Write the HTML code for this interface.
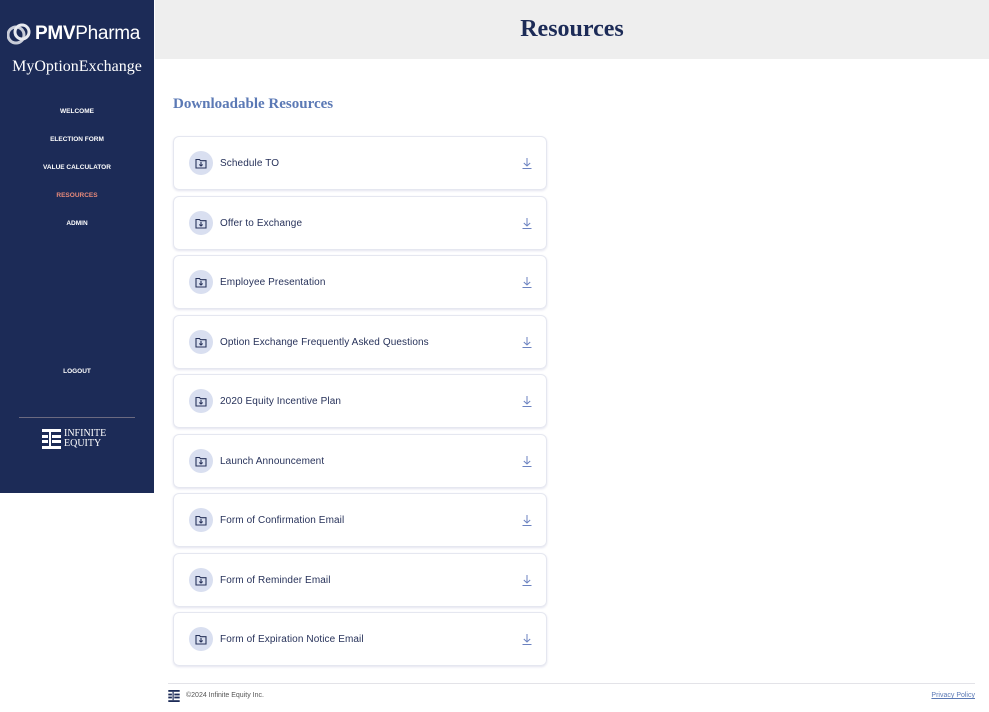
<!DOCTYPE html>
<html><head><meta charset="utf-8"><style>
*{margin:0;padding:0;box-sizing:border-box}
body{width:989px;height:712px;background:#fff;font-family:"Liberation Sans",sans-serif;position:relative;overflow:hidden}
.side{position:absolute;left:0;top:0;width:154px;height:493px;background:#1c2b57;color:#fff}
.logo{position:absolute;left:7px;top:22px;display:flex;align-items:center}
.logo .t{font-size:19px;margin-left:4px;letter-spacing:-0.3px}
.moe{position:absolute;top:58px;width:154px;text-align:center;font-family:"Liberation Serif",serif;font-size:16px}
.nav{position:absolute;width:154px;text-align:center;font-size:6.5px;font-weight:bold}
.hdr{position:absolute;left:155px;top:0;width:834px;height:59px;background:#eeeeee;text-align:center;font-family:"Liberation Serif",serif;font-weight:bold;font-size:24px;color:#1c2b57;line-height:59px}
h2{position:absolute;left:173px;top:96px;font-family:"Liberation Serif",serif;font-size:15px;color:#5b79b5;font-weight:bold}
.card{position:absolute;left:173px;width:374px;height:54px;border:1px solid #e5e7f0;border-radius:6px;box-shadow:0 1px 2px rgba(60,70,140,.15);display:flex;align-items:center}
.ic{width:24px;height:24px;border-radius:50%;background:#d9dff0;margin-left:15px;display:flex;align-items:center;justify-content:center}
.card span{margin-left:7px;font-size:10px;color:#27325a;letter-spacing:0.1px}
.dl{position:absolute;right:14px;top:21px}
</style></head><body>
<div class="side">
 <div class="logo"><svg width="24" height="24" viewBox="0 0 24 24"><circle cx="9" cy="13" r="8" fill="none" stroke="#c8ccd8" stroke-width="3"/><circle cx="15" cy="10" r="7" fill="none" stroke="#e8eaf0" stroke-width="3"/></svg><span class="t"><b>PMV</b>Pharma</span></div>
 <div class="moe">MyOptionExchange</div>
 <div class="nav" style="top:108px">WELCOME</div>
 <div class="nav" style="top:136px">ELECTION FORM</div>
 <div class="nav" style="top:164px">VALUE CALCULATOR</div>
 <div class="nav" style="top:192px;color:#e88a7a">RESOURCES</div>
 <div class="nav" style="top:220px">ADMIN</div>
 <div class="nav" style="top:368px">LOGOUT</div>
 <div style="position:absolute;left:19px;top:417px;width:116px;height:1px;background:#6b6a80"></div>
 <div style="position:absolute;left:42px;top:429px;display:flex;align-items:center">
  <svg width="19" height="20" viewBox="0 0 19 20" fill="#fff"><rect x="0" y="0" width="19" height="3"/><rect x="0" y="6" width="6" height="3"/><rect x="10" y="6" width="9" height="3"/><rect x="0" y="11" width="6" height="3"/><rect x="10" y="11" width="9" height="3"/><rect x="7" y="3" width="2" height="14"/><rect x="0" y="17" width="19" height="3"/></svg>
  <div style="font-family:'Liberation Serif',serif;font-size:10px;line-height:10px;margin-left:3px">INFINITE<br>EQUITY</div>
 </div>
</div>
<div class="hdr">Resources</div>
<h2>Downloadable Resources</h2>
<div class="card" style="top:136px"><div class="ic"><svg width="12" height="11" viewBox="0 0 12 11" fill="none" stroke="#27325a" stroke-width="1.1"><path d="M1 1.5h3.5l1 1.2H11v7.3H1z"/><path d="M6 4v4M4.3 6.5 6 8l1.7-1.5"/></svg></div><span>Schedule TO</span><svg class="dl" width="10" height="11" viewBox="0 0 10 11" fill="none" stroke="#6b82c0" stroke-width="1"><path d="M5 0v8M1.8 5 5 8l3.2-3M0.5 10.5h9"/></svg></div>
<div class="card" style="top:196px"><div class="ic"><svg width="12" height="11" viewBox="0 0 12 11" fill="none" stroke="#27325a" stroke-width="1.1"><path d="M1 1.5h3.5l1 1.2H11v7.3H1z"/><path d="M6 4v4M4.3 6.5 6 8l1.7-1.5"/></svg></div><span>Offer to Exchange</span><svg class="dl" width="10" height="11" viewBox="0 0 10 11" fill="none" stroke="#6b82c0" stroke-width="1"><path d="M5 0v8M1.8 5 5 8l3.2-3M0.5 10.5h9"/></svg></div>
<div class="card" style="top:255px"><div class="ic"><svg width="12" height="11" viewBox="0 0 12 11" fill="none" stroke="#27325a" stroke-width="1.1"><path d="M1 1.5h3.5l1 1.2H11v7.3H1z"/><path d="M6 4v4M4.3 6.5 6 8l1.7-1.5"/></svg></div><span>Employee Presentation</span><svg class="dl" width="10" height="11" viewBox="0 0 10 11" fill="none" stroke="#6b82c0" stroke-width="1"><path d="M5 0v8M1.8 5 5 8l3.2-3M0.5 10.5h9"/></svg></div>
<div class="card" style="top:315px"><div class="ic"><svg width="12" height="11" viewBox="0 0 12 11" fill="none" stroke="#27325a" stroke-width="1.1"><path d="M1 1.5h3.5l1 1.2H11v7.3H1z"/><path d="M6 4v4M4.3 6.5 6 8l1.7-1.5"/></svg></div><span>Option Exchange Frequently Asked Questions</span><svg class="dl" width="10" height="11" viewBox="0 0 10 11" fill="none" stroke="#6b82c0" stroke-width="1"><path d="M5 0v8M1.8 5 5 8l3.2-3M0.5 10.5h9"/></svg></div>
<div class="card" style="top:374px"><div class="ic"><svg width="12" height="11" viewBox="0 0 12 11" fill="none" stroke="#27325a" stroke-width="1.1"><path d="M1 1.5h3.5l1 1.2H11v7.3H1z"/><path d="M6 4v4M4.3 6.5 6 8l1.7-1.5"/></svg></div><span>2020 Equity Incentive Plan</span><svg class="dl" width="10" height="11" viewBox="0 0 10 11" fill="none" stroke="#6b82c0" stroke-width="1"><path d="M5 0v8M1.8 5 5 8l3.2-3M0.5 10.5h9"/></svg></div>
<div class="card" style="top:434px"><div class="ic"><svg width="12" height="11" viewBox="0 0 12 11" fill="none" stroke="#27325a" stroke-width="1.1"><path d="M1 1.5h3.5l1 1.2H11v7.3H1z"/><path d="M6 4v4M4.3 6.5 6 8l1.7-1.5"/></svg></div><span>Launch Announcement</span><svg class="dl" width="10" height="11" viewBox="0 0 10 11" fill="none" stroke="#6b82c0" stroke-width="1"><path d="M5 0v8M1.8 5 5 8l3.2-3M0.5 10.5h9"/></svg></div>
<div class="card" style="top:493px"><div class="ic"><svg width="12" height="11" viewBox="0 0 12 11" fill="none" stroke="#27325a" stroke-width="1.1"><path d="M1 1.5h3.5l1 1.2H11v7.3H1z"/><path d="M6 4v4M4.3 6.5 6 8l1.7-1.5"/></svg></div><span>Form of Confirmation Email</span><svg class="dl" width="10" height="11" viewBox="0 0 10 11" fill="none" stroke="#6b82c0" stroke-width="1"><path d="M5 0v8M1.8 5 5 8l3.2-3M0.5 10.5h9"/></svg></div>
<div class="card" style="top:553px"><div class="ic"><svg width="12" height="11" viewBox="0 0 12 11" fill="none" stroke="#27325a" stroke-width="1.1"><path d="M1 1.5h3.5l1 1.2H11v7.3H1z"/><path d="M6 4v4M4.3 6.5 6 8l1.7-1.5"/></svg></div><span>Form of Reminder Email</span><svg class="dl" width="10" height="11" viewBox="0 0 10 11" fill="none" stroke="#6b82c0" stroke-width="1"><path d="M5 0v8M1.8 5 5 8l3.2-3M0.5 10.5h9"/></svg></div>
<div class="card" style="top:612px"><div class="ic"><svg width="12" height="11" viewBox="0 0 12 11" fill="none" stroke="#27325a" stroke-width="1.1"><path d="M1 1.5h3.5l1 1.2H11v7.3H1z"/><path d="M6 4v4M4.3 6.5 6 8l1.7-1.5"/></svg></div><span>Form of Expiration Notice Email</span><svg class="dl" width="10" height="11" viewBox="0 0 10 11" fill="none" stroke="#6b82c0" stroke-width="1"><path d="M5 0v8M1.8 5 5 8l3.2-3M0.5 10.5h9"/></svg></div>
<div style="position:absolute;left:168px;top:683px;width:807px;height:1px;background:#e3e3e8"></div>
<svg style="position:absolute;left:168px;top:690px" width="12" height="12" viewBox="0 0 19 20" fill="#1c2b57"><rect x="0" y="0" width="19" height="3"/><rect x="0" y="6" width="6" height="3"/><rect x="10" y="6" width="9" height="3"/><rect x="0" y="11" width="6" height="3"/><rect x="10" y="11" width="9" height="3"/><rect x="7" y="3" width="2" height="14"/><rect x="0" y="17" width="19" height="3"/></svg>
<div style="position:absolute;left:186px;top:692px;font-size:7px;color:#555">©2024 Infinite Equity Inc.</div>
<div style="position:absolute;right:14px;top:692px;font-size:7px;color:#5b79b5;text-decoration:underline">Privacy Policy</div>
</body></html>
